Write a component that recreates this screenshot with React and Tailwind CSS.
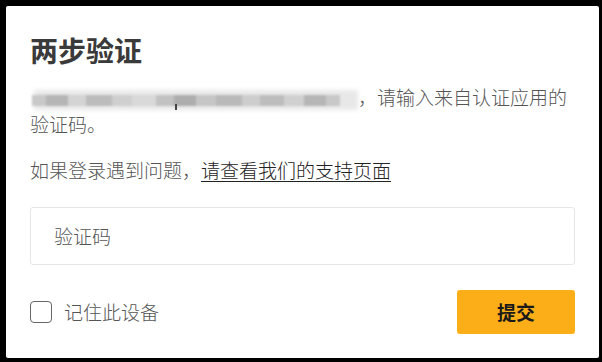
import React from "react";

const font = { fontFamily: '"Noto Sans CJK SC", "Noto Sans", sans-serif' };

function Mosaic() {
  const blocks = [
    ["#c9c9c9", 14], ["#b5b5b5", 22], ["#d4d4d4", 18], ["#bcbcbc", 26], ["#cfcfcf", 20],
    ["#d9d9d9", 24], ["#c2c2c2", 18], ["#aeaeae", 22], ["#c6c6c6", 20], ["#b9b9b9", 26],
    ["#cdcdcd", 18], ["#bdbdbd", 24], ["#d0d0d0", 20], ["#b6b6b6", 22], ["#c8c8c8", 14],
  ];
  return (
    <span className="relative inline-block w-[328px] h-[22px] align-middle">
      <span className="absolute left-[4px] right-0 top-[1px] h-[20px] bg-[#e8e8e8] blur-[2px]" />
      <span className="absolute left-[2px] top-[6px] flex h-[11px] blur-[1px]">
        {blocks.map(([c, w], i) => (
          <span key={i} className="h-full" style={{ background: c, width: w }} />
        ))}
      </span>
      <span className="absolute left-[145px] top-[15px] w-[2px] h-[6px] bg-[#444]" />
    </span>
  );
}

export default function App() {
  return (
    <div className="w-[602px] h-[362px] bg-black pt-[6px] pl-[6px] pr-[3px]" style={font}>
      <div className="bg-white rounded-[2px] px-6 pt-[26px] pb-[24px]">
        <h1 className="text-[28px] leading-[36px] font-bold text-[#3a3a3a]">两步验证</h1>
        <p className="mt-[16px] text-[19px] leading-[26px] font-light text-[#555]">
          <Mosaic />
          ，请输入来自认证应用的
          <br />
          验证码。
        </p>
        <p className="mt-[20px] text-[19px] leading-[26px] font-light text-[#555]">
          如果登录遇到问题，
          <a className="text-[#222] underline underline-offset-[3px] decoration-[1px]">请查看我们的支持页面</a>
        </p>
        <div className="mt-[24px] h-[58px] border border-[#e6e6e6] rounded-[3px] flex items-center pl-[23px] text-[19px] font-light text-[#555]">
          验证码
        </div>
        <div className="mt-[25px] flex items-center justify-between">
          <label className="flex items-center gap-[12px] text-[19px] font-light text-[#555]">
            <span className="w-[22px] h-[22px] border-[1.5px] border-[#666] rounded-[4px] inline-block" />
            记住此设备
          </label>
          <button className="w-[118px] h-[44px] rounded-[3px] bg-[#fcae18] text-[19px] font-bold text-[#1a1a1a]">
            提交
          </button>
        </div>
      </div>
    </div>
  );
}
